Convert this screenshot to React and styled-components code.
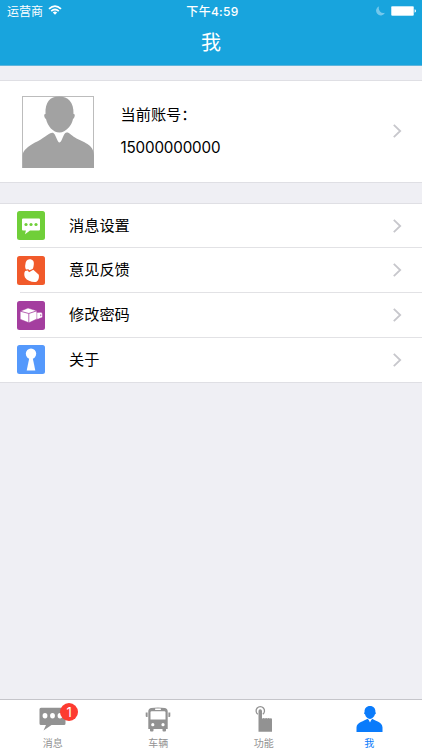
import styled, { createGlobalStyle } from "styled-components";

const GlobalStyle = createGlobalStyle`
    * {
        box-sizing: border-box;
    }
    body {
        margin: 0;
        background-color: #efeff4;
        font-family: Inter, 'Noto Sans CJK SC', sans-serif;
    }
    svg {
        display: block;
        flex-shrink: 0;
    }
`;
const Screen = styled.div`
    height: 750px;
    display: flex;
    flex-direction: column;
    background-color: #efeff4;
    overflow: hidden;
`;
const Header = styled.header`
    height: 66px;
    flex-shrink: 0;
    background-color: #18a4dd;
    border-bottom: 1px solid #5fb5dc;
    color: #ffffff;
`;
const StatusBar = styled.div`
    height: 22px;
    display: grid;
    grid-template-columns: 1fr auto 1fr;
    align-items: center;
    padding: 0 6px 0 7px;
    font-size: 12px;
    line-height: 21px;
`;
const Carrier = styled.div`
    display: flex;
    align-items: center;
    gap: 5px;

    svg {
        margin-bottom: 2px;
    }
`;
const CarrierName = styled.span`
    padding-top: 1px;
`;
const Time = styled.div`
    padding: 1px 0 0 2px;
    font-weight: 500;
    letter-spacing: 0.3px;
`;
const Power = styled.div`
    display: flex;
    align-items: center;
    justify-content: flex-end;
    gap: 6px;
`;
const Title = styled.h1`
    margin: 0;
    font-size: 20px;
    font-weight: 400;
    line-height: 42px;
    text-align: center;
`;
const Content = styled.main`
    flex: 1;
    padding-top: 14px;
`;
const Account = styled.section`
    height: 103px;
    display: flex;
    align-items: center;
    padding: 0 20px 0 22px;
    background-color: #ffffff;
    border-top: 1px solid #dfdfe4;
    border-bottom: 1px solid #dfdfe4;

    > svg {
        margin-bottom: 1px;
    }
`;
const Avatar = styled.div`
    width: 72px;
    height: 72px;
    border: 1px solid #bcbcbc;
    background-color: #ffffff;

    svg {
        margin: -1px;
    }
`;
const AccountText = styled.div`
    flex: 1;
    margin-left: 26.5px;
    padding-bottom: 2px;
    color: #000000;
`;
const AccountLine = styled.p`
    margin: 0;
    font-size: 15.2px;
    line-height: 33px;
    letter-spacing: ${(props) => props.$spacing || "0"};
`;
const Menu = styled.section`
    margin-top: 20px;
    background-color: #ffffff;
    border-top: 1px solid #dfdfe4;
    border-bottom: 1px solid #dfdfe4;
`;
const MenuRow = styled.div`
    height: ${(props) => (props.$short ? "44px" : "45px")};
    display: flex;
    align-items: center;
    margin-left: 17px;
    padding: 0 20px 1px 0;
    background-image: ${(props) =>
        props.$last ? "none" : "linear-gradient(#e2e2e5, #e2e2e5)"};
    background-repeat: no-repeat;
    background-position: 3px 100%;
    background-size: 100% 1px;
`;
const MenuIcon = styled.div`
    width: 28px;
    height: 29px;
    display: flex;
    align-items: center;
    justify-content: center;
    border-radius: 2.5px;
    background-color: ${(props) => props.$color};
`;
const MenuLabel = styled.span`
    flex: 1;
    margin-left: 24px;
    font-size: 15.2px;
    line-height: 24px;
    color: #000000;
`;
const TabBar = styled.nav`
    height: 51px;
    flex-shrink: 0;
    display: grid;
    grid-template-columns: repeat(4, 1fr);
    background-color: #ffffff;
    border-top: 1px solid #c5c5ca;
`;
const Tab = styled.div`
    display: flex;
    flex-direction: column;
    align-items: center;
    padding-top: 5px;
    color: ${(props) => (props.$active ? "#0a7bfb" : "#929292")};
`;
const TabIcon = styled.div`
    position: relative;
    height: 28px;
`;
const TabLabel = styled.span`
    margin-top: 3px;
    font-size: 10px;
    line-height: 15px;
`;
const Badge = styled.span`
    position: absolute;
    top: -2px;
    left: 21px;
    width: 18px;
    height: 18px;
    border-radius: 50%;
    background-color: #fd3b30;
    color: #ffffff;
    font-size: 13px;
    line-height: 18px;
    text-align: center;
`;

function WifiIcon() {
    return (
        <svg width="14" height="10" viewBox="0 0 14 10" fill="none" stroke="#fff" strokeWidth="1.7">
            <path d="M1 3.9Q7-1.7 13 3.9" />
            <path d="M3.2 6.2Q7 2.8 10.8 6.2" />
            <path d="M4.8 7.4Q7 5.6 9.2 7.4L7 9.8Z" fill="#fff" stroke="none" />
        </svg>
    );
}

function MoonIcon() {
    return (
        <svg width="9" height="10" viewBox="0 0 9 10">
            <path d="M3.2.3A4.7 4.7 0 1 0 9 6.8 4.8 4.8 0 0 1 3.2.3Z" fill="#74c8ec" />
        </svg>
    );
}

function BatteryIcon() {
    return (
        <svg width="25" height="10" viewBox="0 0 25 10">
            <rect width="23" height="10" rx="1.4" fill="#a5dcf3" />
            <rect x=".7" y=".7" width="21.6" height="8.6" rx=".6" fill="#fff" />
            <path d="M23.6 3.3Q25 3.6 25 5T23.6 6.7Z" fill="#fff" />
        </svg>
    );
}

function AvatarIcon() {
    return (
        <svg width="72" height="72" viewBox="0 0 72 72" fill="#a2a2a2">
            <path d="M37 .5C46 .5 52 6 51.5 18C53.5 17.5 53 21.5 51 23C50 29 44 36.5 37.5 36.5C31 36.5 25.5 30 24 23C22 21.5 21.5 17.5 23.5 18C23 6 28 .5 37 .5Z" />
            <path d="M31 36.7C33.5 37.5 35.5 46.5 37.5 46.5C40 46.5 41 37 44.5 36.5C47 36 49 39 53 41.5C61 46.5 72 48 72 59.5V72H.5V59.5C.5 55 6 50 13 46.5C21 43 27.5 36 31 36.7Z" />
        </svg>
    );
}

function PersonIcon() {
    return (
        <svg width="27" height="28" viewBox="0 0 27 28" fill="currentColor">
            <path d="M14 1C17.5 1 19.7 3.4 19.4 7.2C20.3 7.5 19.8 9.3 19 9.3C18 12 16.3 14 14 14C11.5 14 9.7 12 9 9.3C8.2 9.3 7.6 7.5 8.6 7.2C8.2 3.4 10.5 1 14 1Z" />
            <path d="M11.5 13.8Q12.8 14.3 14 17.5Q15.2 14.3 16.5 13.8C18.5 16 26.5 17 26.5 22.5V27H.5V22.5C.5 17.5 8.5 16 11.5 13.8Z" />
        </svg>
    );
}

function BubbleIcon() {
    return (
        <svg width="27" height="28" viewBox="0 0 27 28">
            <path d="M2 2.8H25Q26.5 2.8 26.5 4.3V18.5Q26.5 20 25 20H12.5L4.5 25.5L7 20H2Q.5 20 .5 18.5V4.3Q.5 2.8 2 2.8Z" fill="currentColor" />
            <g fill="#fff">
                <ellipse cx="6" cy="10.7" rx="2.4" ry="2.7" />
                <ellipse cx="13.5" cy="10.7" rx="2.4" ry="2.7" />
                <ellipse cx="21" cy="10.7" rx="2.4" ry="2.7" />
            </g>
        </svg>
    );
}

function BusIcon() {
    return (
        <svg width="26" height="28" viewBox="0 0 26 28">
            <path d="M6 3Q13 2 20 3Q22.7 3.5 22.7 6.5V24H21V25.5Q21 26.5 20 26.5H18.5Q17.5 26.5 17.5 25.5V24H8.5V25.5Q8.5 26.5 7.5 26.5H6Q5 26.5 5 25.5V24H3.3V6.5Q3.3 3.5 6 3Z" fill="currentColor" />
            <path d="M.7 7.5H2.6V12H1.7Q.7 12 .7 11ZM23.4 7.5H25.3V11Q25.3 12 24.3 12H23.4Z" fill="currentColor" />
            <path d="M5.5 7.4Q5.5 6.3 6.6 6.3H19.4Q20.5 6.3 20.5 7.4V14.5H5.5Z" fill="#fff" />
            <rect x="10" y="3.6" width="6" height="1.3" rx=".6" fill="#fff" />
            <circle cx="7.8" cy="19.7" r="1.6" fill="#fff" />
            <circle cx="18" cy="19.7" r="1.6" fill="#fff" />
        </svg>
    );
}

function TouchIcon() {
    return (
        <svg width="20" height="28" viewBox="0 0 20 28" fill="currentColor">
            <path d="M3.8 9.2A4.2 4.2 0 1 1 8.8 9.2" fill="none" stroke="currentColor" strokeWidth="1.3" />
            <path d="M4.5 6Q4.5 4.3 6.2 4.3T8 6V13.5H8.5Q9.7 12.5 10.9 13.5Q12.2 12.5 13.4 13.5Q14.6 12.5 15.8 13.5Q18 12.7 18 14.5V26.8H4.5Z" />
        </svg>
    );
}

function MessageGlyph() {
    return (
        <svg width="28" height="29" viewBox="0 0 28 29">
            <path d="M6 7.5H22Q23 7.5 23 8.5V18.5Q23 19.5 22 19.5H13L8 23.3L8.9 19.5H6Q5 19.5 5 18.5V8.5Q5 7.5 6 7.5Z" fill="#fff" />
            <g fill="#70cf39">
                <circle cx="9" cy="13.5" r="1.6" />
                <circle cx="14" cy="13.5" r="1.6" />
                <circle cx="19" cy="13.5" r="1.6" />
            </g>
        </svg>
    );
}

function FeedbackGlyph() {
    return (
        <svg width="28" height="29" viewBox="0 0 28 29">
            <g fill="#fff">
                <path d="M12.5 3.3C16 3.3 17.3 5.8 16.8 8.5C16.5 10.5 16.3 12 15.6 13L12.5 14.2L11.3 13.3L9 13.5C8 12 8 10 8.4 8.3C8.7 5.6 9.8 3.4 12.5 3.3Z" />
                <path d="M8.2 15L10.8 14.6L12 16.2L16.3 13.8L21.8 18.8C22.3 22 21.5 25.5 18.5 26C14.5 26.3 10 24.5 8 21.5C7 19.5 7 16.5 8.2 15Z" />
            </g>
        </svg>
    );
}

function PasswordGlyph() {
    return (
        <svg width="28" height="29" viewBox="0 0 28 29">
            <g fill="#fff" stroke="#a43e9f" strokeWidth=".5" strokeLinejoin="round">
                <path d="M17.5 11.5L24.5 11.3Q25.8 12.3 25.5 15.5Q25 17.3 23.5 17L21.5 18L17.5 18.5Z" />
                <path d="M3.2 10.2L11 7L19.8 9.8V18L12 21.8L3.2 18.3Z" />
                <path d="M3.2 10.2L11.8 12.5L19.8 9.8M11.8 12.5V21.8" fill="none" strokeWidth=".8" />
            </g>
            <ellipse cx="23.8" cy="14.3" rx=".5" ry="1" fill="#a43e9f" />
        </svg>
    );
}

function KeyholeGlyph() {
    return (
        <svg width="28" height="29" viewBox="0 0 28 29" fill="#fff">
            <circle cx="14" cy="8.7" r="5.2" />
            <path d="M12.5 12H15.5L18.3 25.5H9.7Z" />
        </svg>
    );
}

function Chevron() {
    return (
        <svg width="9" height="14" viewBox="0 0 9 14" fill="none" stroke="#c7c7cc" strokeWidth="1.8">
            <path d="M.8 .8L7.2 7L.8 13.2" />
        </svg>
    );
}

const menu = [
    { label: "消息设置", color: "#70cf39", Glyph: MessageGlyph },
    { label: "意见反馈", color: "#f15a2b", Glyph: FeedbackGlyph },
    { label: "修改密码", color: "#a43e9f", Glyph: PasswordGlyph },
    { label: "关于", color: "#5599fc", Glyph: KeyholeGlyph },
];

const tabs = [
    { label: "消息", Icon: BubbleIcon, badge: 1 },
    { label: "车辆", Icon: BusIcon },
    { label: "功能", Icon: TouchIcon },
    { label: "我", Icon: PersonIcon, active: true },
];

function App() {
    return (
        <>
            <GlobalStyle />
            <Screen>
                <Header>
                    <StatusBar>
                        <Carrier>
                            <CarrierName>运营商</CarrierName>
                            <WifiIcon />
                        </Carrier>
                        <Time>下午4:59</Time>
                        <Power>
                            <MoonIcon />
                            <BatteryIcon />
                        </Power>
                    </StatusBar>
                    <Title>我</Title>
                </Header>

                <Content>
                    <Account>
                        <Avatar>
                            <AvatarIcon />
                        </Avatar>
                        <AccountText>
                            <AccountLine>当前账号：</AccountLine>
                            <AccountLine $spacing="-0.16px">15000000000</AccountLine>
                        </AccountText>
                        <Chevron />
                    </Account>

                    <Menu>
                        {menu.map(({ label, color, Glyph }, index) => (
                            <MenuRow
                                key={label}
                                $short={index === 0 || index === menu.length - 1}
                                $last={index === menu.length - 1}
                            >
                                <MenuIcon $color={color}>
                                    <Glyph />
                                </MenuIcon>
                                <MenuLabel>{label}</MenuLabel>
                                <Chevron />
                            </MenuRow>
                        ))}
                    </Menu>
                </Content>

                <TabBar>
                    {tabs.map(({ label, Icon, badge, active }) => (
                        <Tab key={label} $active={active}>
                            <TabIcon>
                                <Icon />
                                {badge && <Badge>{badge}</Badge>}
                            </TabIcon>
                            <TabLabel>{label}</TabLabel>
                        </Tab>
                    ))}
                </TabBar>
            </Screen>
        </>
    );
}

export default App;
